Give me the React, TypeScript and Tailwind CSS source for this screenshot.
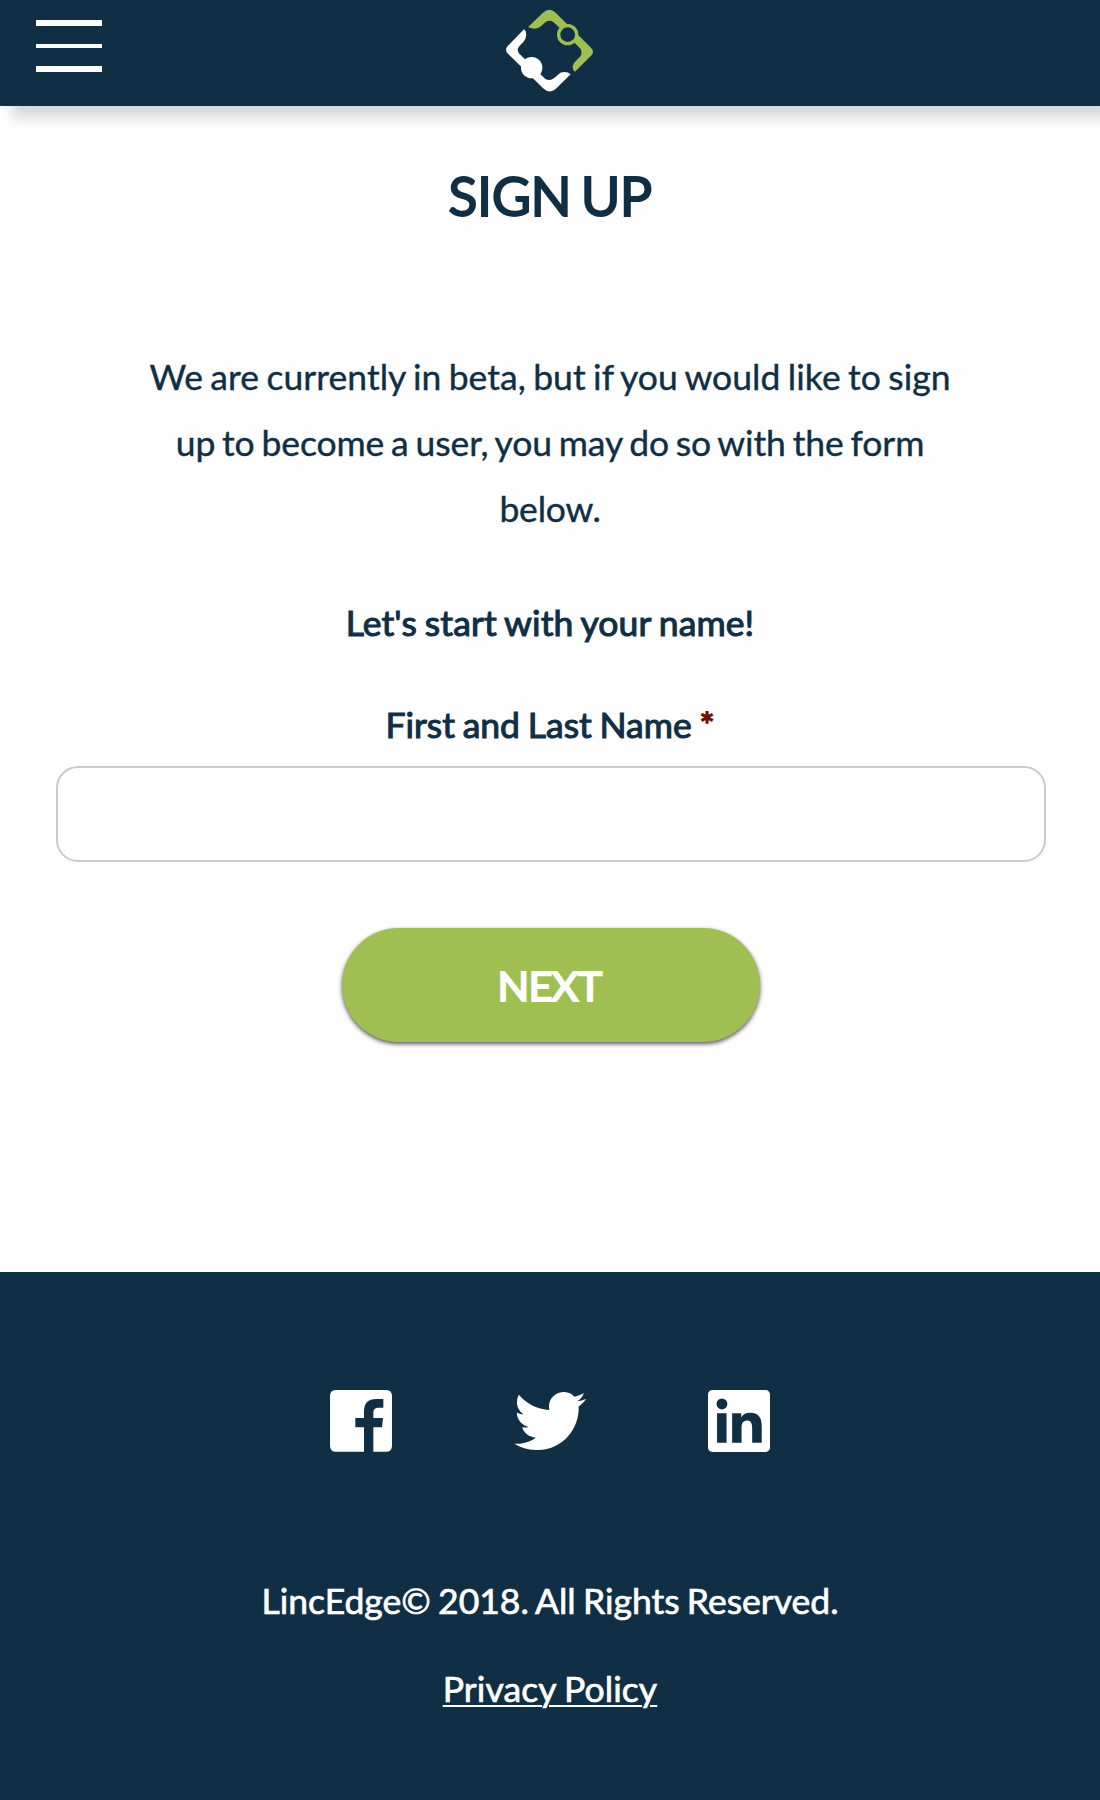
import React from "react";

function Logo() {
  return (
    <svg className="h-[110px] w-[120px] shrink-0" viewBox="0 0 360 330">
      <path
        fill="#a0bf52"
        d="M115 80 L159 38 Q178 21 197 38 L276 116 L303 143 Q315 155 303 167 L255 215 Q247 210 248 198 Q250 189 258 182 L270 170 Q280 158 270 145 L246 121 L210 85 L190 66 Q177 58 164 68 L153 79 Q139 92 115 82 Z"
      />
      <circle cx="233" cy="104" r="27" fill="#112f44" stroke="#a0bf52" strokeWidth="10" />
      <path
        fill="#fffffe"
        d="M102 88 L54 137 Q42 149 54 161 L161 266 Q179 282 197 267 L242 223 Q231 213 211 218 L193 234 Q180 245 166 237 L88 161 Q78 149 89 137 L102 124 Q112 110 107 94 Z"
      />
      <circle cx="125" cy="203" r="32" fill="#fffffe" />
    </svg>
  );
}

function FacebookIcon() {
  return (
    <svg className="size-[62px]" viewBox="0 0 186 186" fill="white">
      <path d="M18 0H168Q186 0 186 18V167Q186 185 168 185H130V112H156L159 84H130V67Q130 53 145 53H160V27H139Q102 27 102 64V84H76V112H102V185H18Q0 185 0 167V18Q0 0 18 0Z" />
    </svg>
  );
}

function TwitterIcon() {
  return (
    <svg className="h-[58px] w-[72px]" viewBox="0 2.25 24 19.5" preserveAspectRatio="none" fill="white">
      <path d="M23.954 4.569c-.885.389-1.83.654-2.825.775 1.014-.611 1.794-1.574 2.163-2.723-.951.555-2.005.959-3.127 1.184-.896-.959-2.173-1.559-3.591-1.559-2.717 0-4.92 2.203-4.92 4.917 0 .39.045.765.127 1.124C7.691 8.094 4.066 6.13 1.64 3.161c-.427.722-.666 1.561-.666 2.475 0 1.71.87 3.213 2.188 4.096-.807-.026-1.566-.248-2.228-.616v.061c0 2.385 1.693 4.374 3.946 4.827-.413.111-.849.171-1.296.171-.314 0-.615-.03-.916-.086.631 1.953 2.445 3.377 4.604 3.417-1.68 1.319-3.809 2.105-6.102 2.105-.39 0-.779-.023-1.17-.067 2.189 1.394 4.768 2.209 7.557 2.209 9.054 0 13.999-7.496 13.999-13.986 0-.209 0-.42-.015-.63.961-.689 1.8-1.56 2.46-2.548l-.047-.02z" />
    </svg>
  );
}

function LinkedInIcon() {
  return (
    <svg className="size-[62px]" viewBox="0 0 24 24" fill="white">
      <path d="M20.8 20.452h-3.7v-5.569c0-1.328-.2-3.037-1.9-3.037-1.853 0-2.2 1.445-2.2 2.939v5.667H9.351V9h3.5v1.5h.046c.477-.9 1.637-1.7 3.37-1.7 3.601 0 4.533 2.3 4.533 5.366v6.286zM5.4 7.5a2.1 2.1 0 1 1 0-4.2 2.1 2.1 0 0 1 0 4.2zm1.782 12.952H3.5V9h3.682v11.452zM22.225 0H1.771C.792 0 0 .774 0 1.729v20.542C0 23.227.792 24 1.771 24h20.451C23.2 24 24 23.227 24 22.271V1.729C24 .774 23.2 0 22.222 0h.003z" />
    </svg>
  );
}

export default function App() {
  return (
    <div className="flex h-[1800px] w-[1100px] flex-col overflow-hidden bg-[#fefefe] font-['Lato',sans-serif] text-[36px] text-[#112f44]">
      <header className="grid h-[106px] shrink-0 grid-cols-[490px_120px_490px] bg-[#112f44] shadow-[12px_12px_12px_#d8d8d8]">
        <button aria-label="Menu" className="ml-9 mt-5 flex h-[52px] w-[66px] flex-col justify-between">
          <span className="h-1.5 w-full bg-white" />
          <span className="h-1 w-full bg-white" />
          <span className="h-1.5 w-full bg-white" />
        </button>
        <Logo />
      </header>

      <main className="flex h-[1166px] shrink-0 flex-col items-center text-center">
        <h1 className="mt-[57px] text-[54px] leading-[66px] tracking-[-0.5px] [-webkit-text-stroke:1.8px_#112f44] [word-spacing:-4px]">SIGN UP</h1>
        <p className="mt-[115px] w-[840px] text-[35.5px] leading-[66px] [-webkit-text-stroke:0.4px_#112f44]">
          <span className="tracking-[0.05px] [word-spacing:-1.8px]">We are currently in beta, but if you would like to sign </span>
          <span className="tracking-[-0.08px] [word-spacing:-2.2px]">up to become a user, you may do so with the form </span>
          <span className="tracking-[-0.2px]">below.</span>
        </p>
        <p className="mt-[48px] text-[35.5px] leading-[66px] tracking-[0.12px] [-webkit-text-stroke:1.1px_#112f44] [word-spacing:-1.3px]">Let's start with your name!</p>
        <label htmlFor="name" className="mt-[36px] text-[35.5px] leading-[66px] [-webkit-text-stroke:1.1px_#112f44] [word-spacing:-1.3px]">
          First and Last Name <span className="text-[#730f08] [-webkit-text-stroke:1.5px_#730f08]">*</span>
        </label>
        <input id="name" className="ml-[2px] mt-[8px] h-24 w-[990px] rounded-[22px] border-2 border-[#cacaca] bg-white px-6" />
        <button className="ml-[2px] mt-[66px] h-[114px] w-[418px] rounded-full bg-[#a0bf52] pr-[3px] text-[41.5px] tracking-[-0.8px] text-white shadow-[0_2px_4px_#555] [-webkit-text-stroke:2px_white]">
          NEXT
        </button>
      </main>

      <footer className="flex grow flex-col items-center bg-[#112f44] text-white [-webkit-text-stroke:0.7px_white]">
        <div className="mt-[118px] flex h-[62px] w-[440px] items-center justify-between">
          <FacebookIcon />
          <TwitterIcon />
          <LinkedInIcon />
        </div>
        <p className="mt-[116px] text-[35.5px] leading-[66px] [word-spacing:-1.8px]">LincEdge© 2018. All Rights Reserved.</p>
        <a href="#privacy" className="mt-[22px] text-[35.5px] leading-[66px] tracking-[0.1px] underline decoration-2 underline-offset-[3px] [word-spacing:-1px]">Privacy Policy</a>
      </footer>
    </div>
  );
}
